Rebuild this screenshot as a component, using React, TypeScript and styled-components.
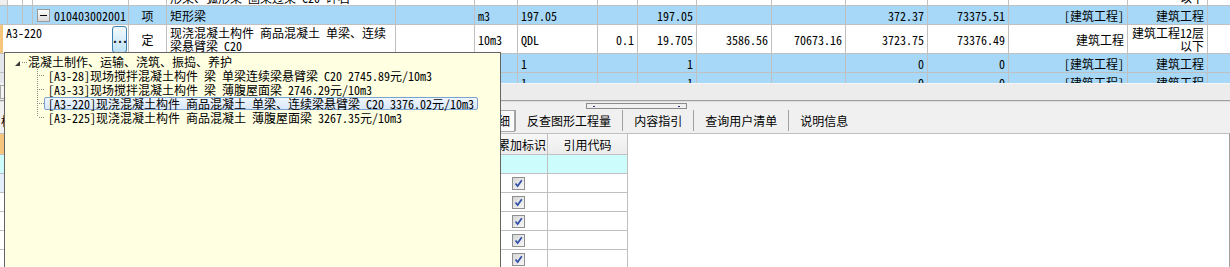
import React, { useLayoutEffect, useRef } from 'react';
import styled, { createGlobalStyle } from 'styled-components';

const GlobalStyle = createGlobalStyle`
  html, body { margin: 0; padding: 0; background: #fff; overflow: hidden; }
  body {
    font-family: "Noto Sans Mono CJK SC", "Noto Sans CJK SC", "Liberation Mono", monospace;
    font-size: 12px;
    color: #000;
  }
  *, *::before, *::after { box-sizing: border-box; }
`;

const BLUE = '#a8d8f8';
const LINE = '#c0c0c0';

const Screen = styled.div`
  position: relative;
  width: 1230px;
  height: 267px;
  overflow: hidden;
  background: #fff;
  display: flex;
  flex-direction: column;
`;

/* ---------- top grid ---------- */
const GridViewport = styled.div`
  flex: none;
  height: 83px;
  overflow: hidden;
  background: #fff;
`;

const Row = styled.div<{ $h: number; $bg?: string }>`
  display: flex;
  height: ${(p) => p.$h}px;
  border-bottom: 1px solid ${LINE};
  background: ${(p) => p.$bg ?? '#fff'};
`;

type Align = 'left' | 'right' | 'center';

const Cell = styled.div<{
  $w: number;
  $align?: Align;
  $top?: boolean;
  $bg?: string;
  $wrap?: boolean;
  $noLine?: boolean;
}>`
  flex: none;
  width: ${(p) => p.$w}px;
  height: 100%;
  padding: 0 3px;
  border-right: 1px solid ${(p) => (p.$noLine ? 'transparent' : LINE)};
  background: ${(p) => p.$bg ?? 'transparent'};
  display: flex;
  align-items: ${(p) => (p.$top ? 'flex-start' : 'center')};
  justify-content: ${(p) =>
    p.$align === 'right' ? 'flex-end' : p.$align === 'center' ? 'center' : 'flex-start'};
  text-align: ${(p) => p.$align ?? 'left'};
  white-space: ${(p) => (p.$wrap ? 'normal' : 'nowrap')};
  line-height: 13px;
  overflow: hidden;
`;

const Indicator = styled.div<{ $color: string; $w: number }>`
  flex: none;
  width: ${(p) => p.$w}px;
  height: 100%;
  background: ${(p) => p.$color};
`;

const CodeCell = styled.div`
  flex: none;
  width: 126px;
  height: 100%;
  padding: 1px 1px 0 3px;
  border-right: 1px solid ${LINE};
  display: flex;
  justify-content: space-between;
  align-items: flex-start;
  line-height: 13px;
`;

const EllipsisButton = styled.div`
  width: 15px;
  height: 27px;
  border: 1px solid #3c7fb1;
  border-radius: 3px;
  background: linear-gradient(to bottom, #f4faff 0%, #d9eefb 50%, #bfe2f7 100%);
  display: flex;
  align-items: center;
  justify-content: center;
  font-weight: bold;
  font-size: 12px;
  letter-spacing: -1px;
  color: #1a1a1a;
  padding-bottom: 4px;
`;

const TreeToggle = styled.div`
  flex: none;
  width: 13px;
  height: 13px;
  margin: 0 4px 0 1px;
  border: 1px solid #9a9a9a;
  background: linear-gradient(to bottom, #fdfdfd, #d8d8d8);
  display: flex;
  align-items: center;
  justify-content: center;
  &::after {
    content: '';
    width: 7px;
    height: 1px;
    background: #000;
  }
`;

const CodeWithToggle = styled.div`
  display: flex;
  align-items: center;
`;

/* ---------- middle strips ---------- */
const LightLine = styled.div`
  flex: none;
  height: 1px;
  background: #f6f6f6;
`;

const ScrollStrip = styled.div`
  flex: none;
  height: 16px;
  background: #ececec;
  display: flex;
  align-items: center;
`;

const ScrollButton = styled.div`
  width: 17px;
  height: 14px;
  border: 1px solid #a8a8a8;
  background: #f4f4f4;
`;

const SplitLine = styled.div`
  flex: none;
  height: 2px;
  border-top: 1px solid #a0a0a0;
  background: #dcdcdc;
`;

const SplitGrip = styled.div`
  position: absolute;
  left: 586px;
  top: 103px;
  width: 101px;
  height: 6px;
  border: 1px solid #8a8a8a;
  background: #f0f0f0;
  display: flex;
  align-items: center;
  justify-content: space-between;
  padding: 0 6px;
  &::before,
  &::after {
    content: '';
    width: 2px;
    height: 1px;
    background: #1c2a78;
  }
`;

/* ---------- tabs ---------- */
const TabBar = styled.div`
  flex: none;
  height: 31px;
  padding-top: 8px;
  background: #f0f0f0;
  display: flex;
  align-items: flex-start;
`;

const Tab = styled.div<{ $first?: boolean; $active?: boolean }>`
  flex: none;
  height: 21px;
  line-height: 21px;
  white-space: nowrap;
  border-left: ${(p) => (p.$first ? 'none' : '1px solid #a0a0a0')};
  padding: ${(p) => (p.$first ? '0 11px 0 1px' : p.$active ? '0 4px 0 10px' : '0 11px')};
  ${(p) =>
    p.$active
      ? `background:#fbfbfb; border:1px solid #a8a8a8; height:22px; line-height:20px;`
      : ''}
`;

/* ---------- lower grid ---------- */
const LowerPanel = styled.div`
  flex: 1;
  display: flex;
  background: #fff;
  border-top: 1px solid ${LINE};
  border-right: 1px solid #a0a0a0;
`;

const LowerGrid = styled.div`
  width: 628px;
  display: flex;
  flex-direction: column;
`;

const LRow = styled.div<{ $h: number; $bg?: string }>`
  display: flex;
  flex: none;
  height: ${(p) => p.$h}px;
  border-bottom: 1px solid ${LINE};
  background: ${(p) => p.$bg ?? '#fff'};
`;

const HeadCell = styled.div<{ $w: number; $bg?: string; $align?: Align }>`
  flex: none;
  width: ${(p) => p.$w}px;
  height: 100%;
  border-right: 1px solid ${LINE};
  background: ${(p) => p.$bg ?? 'linear-gradient(to bottom, #f7f7f7, #ececec)'};
  display: flex;
  align-items: center;
  justify-content: ${(p) =>
    p.$align === 'right' ? 'flex-end' : p.$align === 'left' ? 'flex-start' : 'center'};
  padding: 0 1px;
  white-space: nowrap;
  overflow: hidden;
  font-size: 12px;
`;

const LCell = styled.div<{ $w: number; $bg?: string }>`
  flex: none;
  width: ${(p) => p.$w}px;
  height: 100%;
  border-right: 1px solid ${LINE};
  background: ${(p) => p.$bg ?? 'transparent'};
  display: flex;
  align-items: center;
  justify-content: center;
`;

const CheckBox = styled.div`
  width: 13px;
  height: 13px;
  border: 1px solid #8e8f8f;
  background: linear-gradient(135deg, #d6d6d6, #f7f7f7);
  display: flex;
  align-items: center;
  justify-content: center;
`;

/* ---------- popup tree ---------- */
const Popup = styled.div`
  position: absolute;
  left: 4px;
  top: 52px;
  width: 497px;
  height: 230px;
  background: #ffffe1;
  border: 1px solid #646464;
  padding-top: 1px;
  display: flex;
  flex-direction: column;
  z-index: 5;
`;

const TreeRow = styled.div<{ $indent: number }>`
  flex: none;
  height: 14px;
  display: flex;
  align-items: center;
  padding-left: ${(p) => p.$indent}px;
  white-space: nowrap;
  line-height: 13px;
`;

const NodeLabel = styled.div<{ $selected?: boolean }>`
  height: 13px;
  padding: 0 3px;
  line-height: 11px;
  border: 1px solid ${(p) => (p.$selected ? '#7da2ce' : 'transparent')};
  border-radius: 2px;
  background: ${(p) =>
    p.$selected ? 'linear-gradient(to bottom, #eef5fd, #d9e8fb)' : 'transparent'};
`;

const RootLabel = styled.span`
  line-height: 13px;
`;

const DOT = '#8c8c8c';

function RootExpander() {
  return (
    <svg width="13" height="14" viewBox="0 0 13 14" style={{ flex: 'none' }}>
      <polygon points="5,7 5,12 0,12" fill="#3a3a3a" />
      {[7, 9, 11].map((x) => (
        <rect key={x} x={x} y={8} width={1} height={1} fill={DOT} />
      ))}
    </svg>
  );
}

function Connector({ last }: { last?: boolean }) {
  const vEnd = last ? 7 : 14;
  const vs: number[] = [];
  for (let y = 1; y < vEnd; y += 2) vs.push(y);
  return (
    <svg width="7" height="14" viewBox="0 0 7 14" style={{ flex: 'none' }}>
      {vs.map((y) => (
        <rect key={'v' + y} x={0} y={y} width={1} height={1} fill={DOT} />
      ))}
      {[2, 4, 6].map((x) => (
        <rect key={'h' + x} x={x} y={7} width={1} height={1} fill={DOT} />
      ))}
    </svg>
  );
}

function Check() {
  return (
    <CheckBox>
      <svg width="11" height="11" viewBox="0 0 11 11">
        <path d="M2.5 5.5 L4.6 8 L8.8 2.2" fill="none" stroke="#2f4fa8" strokeWidth="1.7" />
      </svg>
    </CheckBox>
  );
}

/* ---------- data ---------- */
const W = [8, 15, 10, 96, 38, 229, 79, 43, 80, 40, 59, 75, 74, 82, 81, 119, 80, 22];

type RowData = {
  bg: string;
  unit?: string;
  expr?: string;
  content?: string;
  qty?: string;
  price?: string;
  total?: string;
  uprice?: string;
  utotal?: string;
  fee?: string;
  major?: string;
};

function TailCells({ d }: { d: RowData }) {
  return (
    <>
      <Cell $w={W[7]}>{d.unit}</Cell>
      <Cell $w={W[8]}>{d.expr}</Cell>
      <Cell $w={W[9]} $align="right">{d.content}</Cell>
      <Cell $w={W[10]} $align="right">{d.qty}</Cell>
      <Cell $w={W[11]} $align="right">{d.price}</Cell>
      <Cell $w={W[12]} $align="right">{d.total}</Cell>
      <Cell $w={W[13]} $align="right">{d.uprice}</Cell>
      <Cell $w={W[14]} $align="right">{d.utotal}</Cell>
      <Cell $w={W[15]} $align="right" $wrap>{d.fee}</Cell>
      <Cell $w={W[16]} $align="right" $wrap>{d.major}</Cell>
      <Cell $w={W[17]} $noLine />
    </>
  );
}

const subRow: RowData = {
  bg: BLUE,
  expr: '1',
  qty: '1',
  uprice: '0',
  utotal: '0',
  fee: '[建筑工程]',
  major: '建筑工程',
};

const tabs = ['标准换算', '换算信息', '安装费用', '特征及内容', '工料机显示', '单价构成'];
const tabsRight = ['反查图形工程量', '内容指引', '查询用户清单', '说明信息'];

const treeItems = [
  '[A3-28]现场搅拌混凝土构件 梁 单梁连续梁悬臂梁 C20 2745.89元/10m3',
  '[A3-33]现场搅拌混凝土构件 梁 薄腹屋面梁 2746.29元/10m3',
  '[A3-220]现浇混凝土构件 商品混凝土 单梁、连续梁悬臂梁 C20 3376.02元/10m3',
  '[A3-225]现浇混凝土构件 商品混凝土 薄腹屋面梁 3267.35元/10m3',
];

export default function App() {
  const viewport = useRef<HTMLDivElement>(null);
  useLayoutEffect(() => {
    if (viewport.current) viewport.current.scrollTop = 23;
  }, []);

  return (
    <>
      <GlobalStyle />
      <Screen>
        <GridViewport ref={viewport}>
          {/* row 0 (scrolled, only its bottom is visible) */}
          <Row $h={29}>
            <Cell $w={W[0]} $bg="#efefef" />
            <Cell $w={W[1]} />
            <Cell $w={W[2]} />
            <Cell $w={W[3]}>A3-219</Cell>
            <Cell $w={W[4]} $align="center">定</Cell>
            <Cell $w={W[5]} $wrap>现浇混凝土构件 商品混凝土 矩形梁、异形梁、弧形梁 圈梁过梁 C20 碎石</Cell>
            <Cell $w={W[6]} />
            <TailCells
              d={{ bg: '#fff', unit: '10m3', fee: '建筑工程', major: '建筑工程12层以下' }}
            />
          </Row>

          {/* row 1 : bill item */}
          <Row $h={19} $bg={BLUE}>
            <Cell $w={W[0]} />
            <Cell $w={W[1]} />
            <Cell $w={W[2]} />
            <Cell $w={W[3]}>
              <CodeWithToggle>
                <TreeToggle />
                010403002001
              </CodeWithToggle>
            </Cell>
            <Cell $w={W[4]} $align="center">项</Cell>
            <Cell $w={W[5]}>矩形梁</Cell>
            <Cell $w={W[6]} />
            <TailCells
              d={{
                bg: BLUE,
                unit: 'm3',
                expr: '197.05',
                qty: '197.05',
                uprice: '372.37',
                utotal: '73375.51',
                fee: '[建筑工程]',
                major: '建筑工程',
              }}
            />
          </Row>

          {/* row 2 : quota being edited */}
          <Row $h={29}>
            <Indicator $w={3} $color="#f6c57c" />
            <CodeCell>
              <span>A3-220</span>
              <EllipsisButton>...</EllipsisButton>
            </CodeCell>
            <Cell $w={W[4]} $align="center">定</Cell>
            <Cell $w={W[5]} $wrap>现浇混凝土构件 商品混凝土 单梁、连续梁悬臂梁 C20</Cell>
            <Cell $w={W[6]} />
            <TailCells
              d={{
                bg: '#fff',
                unit: '10m3',
                expr: 'QDL',
                content: '0.1',
                qty: '19.705',
                price: '3586.56',
                total: '70673.16',
                uprice: '3723.75',
                utotal: '73376.49',
                fee: '建筑工程',
                major: '建筑工程12层以下',
              }}
            />
          </Row>

          {[0, 1].map((i) => (
            <Row key={i} $h={19} $bg={BLUE}>
              <Cell $w={W[0]} $bg="#e2e6ea" />
              <Cell $w={W[1]} />
              <Cell $w={W[2]} />
              <Cell $w={W[3]} />
              <Cell $w={W[4]} />
              <Cell $w={W[5]} />
              <Cell $w={W[6]} />
              <TailCells d={subRow} />
            </Row>
          ))}
        </GridViewport>

        <LightLine />
        <ScrollStrip>
          <ScrollButton />
        </ScrollStrip>
        <SplitLine />

        <TabBar>
          {tabs.map((t, i) => (
            <Tab key={t} $first={i === 0}>
              {t}
            </Tab>
          ))}
          <Tab $active>工程量明细</Tab>
          {tabsRight.map((t) => (
            <Tab key={t}>{t}</Tab>
          ))}
        </TabBar>

        <LowerPanel>
          <LowerGrid>
            <LRow $h={21}>
              <HeadCell $w={21} $bg="#f6c57c" />
              <HeadCell $w={469}>名称</HeadCell>
              <HeadCell $w={58} $align="right">累加标识</HeadCell>
              <HeadCell $w={80}>引用代码</HeadCell>
            </LRow>
            <LRow $h={19} $bg="#ccfcfc">
              <LCell $w={21} />
              <LCell $w={469} />
              <LCell $w={58} />
              <LCell $w={80} />
            </LRow>
            {[0, 1, 2, 3, 4].map((i) => (
              <LRow key={i} $h={19}>
                <LCell $w={21} $bg={i === 0 ? '#e2eefc' : undefined} />
                <LCell $w={469} />
                <LCell $w={58}>
                  <Check />
                </LCell>
                <LCell $w={80} />
              </LRow>
            ))}
          </LowerGrid>
        </LowerPanel>

        <SplitGrip />

        <Popup>
          <TreeRow $indent={10}>
            <RootExpander />
            <RootLabel>混凝土制作、运输、浇筑、振捣、养护</RootLabel>
          </TreeRow>
          {treeItems.map((t, i) => (
            <TreeRow key={t} $indent={32}>
              <Connector last={i === treeItems.length - 1} />
              <NodeLabel $selected={i === 2}>{t}</NodeLabel>
            </TreeRow>
          ))}
        </Popup>
      </Screen>
    </>
  );
}
